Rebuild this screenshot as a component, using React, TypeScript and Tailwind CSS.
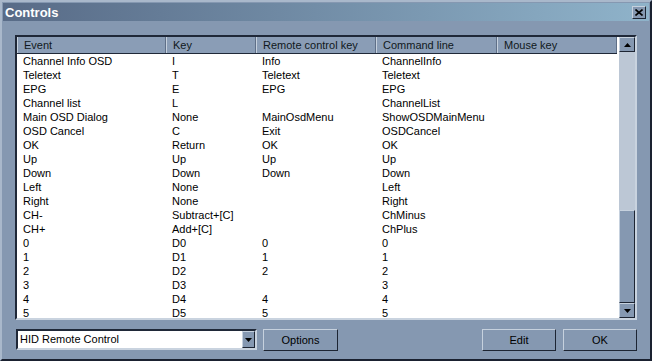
import React from 'react';

const rows = [
  ["Channel Info OSD", "I", "Info", "ChannelInfo"],
  ["Teletext", "T", "Teletext", "Teletext"],
  ["EPG", "E", "EPG", "EPG"],
  ["Channel list", "L", "", "ChannelList"],
  ["Main OSD Dialog", "None", "MainOsdMenu", "ShowOSDMainMenu"],
  ["OSD Cancel", "C", "Exit", "OSDCancel"],
  ["OK", "Return", "OK", "OK"],
  ["Up", "Up", "Up", "Up"],
  ["Down", "Down", "Down", "Down"],
  ["Left", "None", "", "Left"],
  ["Right", "None", "", "Right"],
  ["CH-", "Subtract+[C]", "", "ChMinus"],
  ["CH+", "Add+[C]", "", "ChPlus"],
  ["0", "D0", "0", "0"],
  ["1", "D1", "1", "1"],
  ["2", "D2", "2", "2"],
  ["3", "D3", "", "3"],
  ["4", "D4", "4", "4"],
  ["5", "D5", "5", "5"],
];

const cols = [
  { name: "Event", w: "w-[149px]" },
  { name: "Key", w: "w-[90px]" },
  { name: "Remote control key", w: "w-[120px]" },
  { name: "Command line", w: "w-[121px]" },
  { name: "Mouse key", w: "w-[120px]" },
];

// raised 3D edge, classic style
const raised = "border border-t-[#c6d1de] border-l-[#c6d1de] border-r-[#1d2533] border-b-[#1d2533]";

function Arrow({ up }: { up?: boolean }) {
  return (
    <svg width="7" height="4" viewBox="0 0 7 4">
      <polygon points={up ? "3.5,0 7,4 0,4" : "0,0 7,0 3.5,4"} fill="#000" />
    </svg>
  );
}

function ScrollBtn({ up }: { up?: boolean }) {
  return (
    <div className={`h-[15px] w-full flex items-center justify-center bg-[#8598b1] ${raised}`}>
      <Arrow up={up} />
    </div>
  );
}

export default function App() {
  return (
    <div
      className="w-[652px] h-[361px] bg-[#8598b1] border-2 border-t-[#a9b8cb] border-l-[#a9b8cb] border-r-[#1a2130] border-b-[#1a2130] p-px flex flex-col text-[11px] text-black"
      style={{ fontFamily: '"Liberation Sans", Arial, sans-serif' }}
    >
      {/* title bar */}
      <div className="h-[18px] flex items-center justify-between pl-[2px] pr-[3px] bg-gradient-to-r from-[#586b87] to-[#8fb3ca]">
        <span className="text-white font-bold text-[13px] leading-none">Controls</span>
        <div className={`w-[14px] h-[13px] flex items-center justify-center bg-[#8598b1] ${raised}`}>
          <svg width="8" height="7" viewBox="0 0 8 7">
            <path d="M0.5 0.5 L7.5 6.5 M7.5 0.5 L0.5 6.5" stroke="#000" strokeWidth="1.6" />
          </svg>
        </div>
      </div>

      {/* list */}
      <div className="mt-[14px] mx-[12px] h-[285px] border-2 border-t-[#1f2838] border-l-[#1f2838] border-r-[#c9d3df] border-b-[#c9d3df] bg-white flex overflow-hidden">
        <div className="flex-1 flex flex-col overflow-hidden">
          <div className="flex h-[17px] shrink-0 bg-[#8a9db6] border-b border-[#1f2838]">
            {cols.map((c) => (
              <div
                key={c.name}
                className={`${c.w} shrink-0 pl-[6px] leading-[16px] text-[#101820] border-l border-l-[#c6d1de] border-r border-r-[#5f6f87]`}
              >
                {c.name}
              </div>
            ))}
            <div className="flex-1 border-l border-l-[#c6d1de]" />
          </div>
          {rows.map((r, i) => (
            <div key={i} className="flex h-[14px] shrink-0 leading-[14px]">
              {r.map((cell, j) => (
                <div key={j} className={`${cols[j].w} shrink-0 pl-[6px] whitespace-nowrap`}>
                  {cell}
                </div>
              ))}
            </div>
          ))}
        </div>
        {/* scrollbar */}
        <div className="w-[16px] shrink-0 flex flex-col bg-[#bcc7d5] ml-[2px]">
          <ScrollBtn up />
          <div className="flex-1" />
          <div className={`h-[93px] bg-[#8598b1] ${raised}`} />
          <ScrollBtn />
        </div>
      </div>

      {/* bottom bar */}
      <div className="mt-[9px] ml-[13px] mr-[12px] flex items-start">
        <div className="w-[241px] h-[21px] border-2 border-t-[#1f2838] border-l-[#1f2838] border-r-[#c9d3df] border-b-[#c9d3df] bg-white flex items-center">
          <span className="flex-1 pl-[2px]">HID Remote Control</span>
          <div className={`w-[13px] h-[17px] flex items-center justify-center bg-[#8598b1] ${raised}`}>
            <Arrow />
          </div>
        </div>
        <button className={`ml-[6px] w-[75px] h-[22px] bg-[#8598b1] ${raised}`}>Options</button>
        <div className="flex-1" />
        <button className={`w-[74px] h-[22px] bg-[#8598b1] ${raised}`}>Edit</button>
        <button className={`ml-[7px] w-[74px] h-[22px] bg-[#8598b1] ${raised}`}>OK</button>
      </div>
    </div>
  );
}
